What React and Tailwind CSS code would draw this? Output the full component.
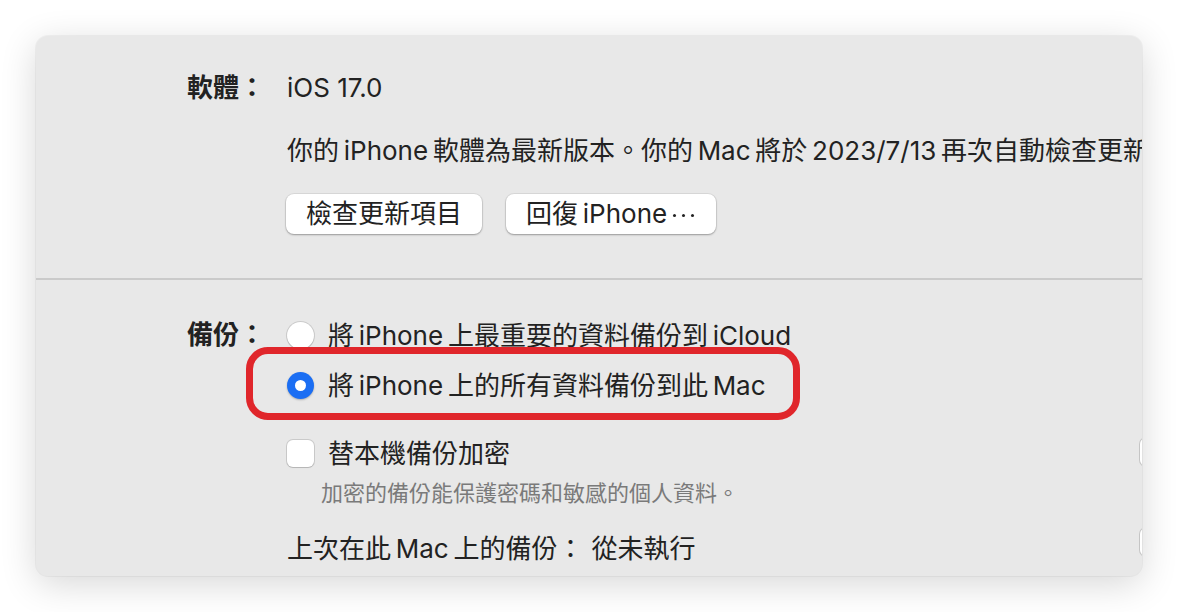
import { useState } from 'react';

function Radio({ checked, onClick }) {
  return (
    <button
      type="button"
      onClick={onClick}
      className={`flex h-[27px] w-[27px] shrink-0 items-center justify-center rounded-full ${
        checked
          ? 'bg-[#1b6ef3] shadow-[0_1px_2px_rgba(0,0,0,0.25)]'
          : 'bg-white shadow-[0_0_0_1px_rgba(0,0,0,0.12),0_1px_1px_rgba(0,0,0,0.12)]'
      }`}
    >
      {checked && <span className="h-[11px] w-[11px] rounded-full bg-white" />}
    </button>
  );
}

function Checkbox({ checked, onClick }) {
  return (
    <button
      type="button"
      onClick={onClick}
      className={`flex h-[27px] w-[27px] shrink-0 items-center justify-center rounded-[6px] ${
        checked ? 'bg-[#1b6ef3]' : 'bg-white'
      } shadow-[0_0_0_1px_rgba(0,0,0,0.13),0_1px_1px_rgba(0,0,0,0.1)]`}
    >
      {checked && <span className="text-[18px] leading-none text-white">✓</span>}
    </button>
  );
}

function MacButton({ children }) {
  return (
    <button
      type="button"
      className="flex h-[40px] items-center rounded-[8px] bg-white px-[20px] text-[26px] leading-[40px] text-[#222] shadow-[0_0_0_1px_rgba(0,0,0,0.06),0_1px_2px_rgba(0,0,0,0.3)]"
    >
      {children}
    </button>
  );
}

// midline ellipsis, like the macOS "⋯"
function Ellipsis() {
  return (
    <span className="ml-[6px] mr-[2px] mt-[3px] inline-flex gap-[6px]">
      <span className="h-[3px] w-[3px] rounded-full bg-[#222]" />
      <span className="h-[3px] w-[3px] rounded-full bg-[#222]" />
      <span className="h-[3px] w-[3px] rounded-full bg-[#222]" />
    </span>
  );
}

export default function App() {
  const [backup, setBackup] = useState('mac');
  const [encrypt, setEncrypt] = useState(false);

  return (
    <div className="h-[612px] w-[1178px] bg-white pl-[36px] pt-[36px] font-[Inter,'Noto_Sans_CJK_TC',sans-serif] text-[#222]">
      <div className="relative h-[540px] w-[1106px] overflow-hidden rounded-[12px] bg-[#e8e8e8] shadow-[0_8px_36px_rgba(0,0,0,0.16),0_0_0_1px_rgba(0,0,0,0.04)]">
        {/* software */}
        <div className="pb-[44px] pt-[33px]">
          <div className="flex h-[36px] items-center text-[26px]">
            <span className="ml-[151px] w-[100px] font-bold">軟體：</span>
            <span>iOS 17.0</span>
          </div>
          <div className="mt-[27px] flex h-[36px] items-center whitespace-nowrap pl-[251px] text-[26px]">
            你的{'\u2009'}iPhone{'\u2009'}軟體為最新版本。你的{'\u2009'}Mac{'\u2009'}將於{'\u2009'}2023/7/13{'\u2009'}再次自動檢查更新。
          </div>
          <div className="mt-[26px] flex gap-[24px] pl-[250px]">
            <MacButton>檢查更新項目</MacButton>
            <MacButton>
              回復{'\u2009'}iPhone
              <Ellipsis />
            </MacButton>
          </div>
        </div>

        <div className="h-[2px] bg-[#cacaca]" />

        {/* backup */}
        <div className="pt-[37px] text-[26px]">
          <div className="flex">
            <span className="ml-[151px] h-[36px] w-[100px] font-bold leading-[36px]">備份：</span>
            <div className="flex flex-col">
              <div className="flex h-[36px] items-center gap-[14px]">
                <Radio checked={backup === 'icloud'} onClick={() => setBackup('icloud')} />
                <span>將{'\u2009'}iPhone{'\u2009'}上最重要的資料備份到{'\u2009'}iCloud</span>
              </div>
              <div className="mt-[14px] flex h-[36px] items-center gap-[14px]">
                <Radio checked={backup === 'mac'} onClick={() => setBackup('mac')} />
                <span>將{'\u2009'}iPhone{'\u2009'}上的所有資料備份到此{'\u2009'}Mac</span>
              </div>
              <div className="mt-[32px] flex h-[36px] items-center gap-[14px]">
                <Checkbox checked={encrypt} onClick={() => setEncrypt((e) => !e)} />
                <span>替本機備份加密</span>
              </div>
              <div className="ml-[34px] mt-[7px] h-[30px] text-[22px] leading-[30px] text-[#7a7a7a]">
                加密的備份能保護密碼和敏感的個人資料。
              </div>
              <div className="mt-[22px] flex h-[36px] items-center">
                上次在此{'\u2009'}Mac{'\u2009'}上的備份：<span className="ml-[8px]">從未執行</span>
              </div>
            </div>
          </div>
        </div>

        {/* clipped controls at right edge */}
        <div className="absolute right-[-40px] top-[402px] h-[28px] w-[42px] rounded-[6px] bg-white shadow-[0_0_0_1px_rgba(0,0,0,0.15)]" />
        <div className="absolute right-[-40px] top-[492px] h-[28px] w-[42px] rounded-[6px] bg-white shadow-[0_0_0_1px_rgba(0,0,0,0.15)]" />

        {/* annotation */}
        <div className="pointer-events-none absolute left-[210px] top-[311px] h-[73px] w-[554px] rounded-[22px] border-[7px] border-[#e0262b]" />
      </div>
    </div>
  );
}
